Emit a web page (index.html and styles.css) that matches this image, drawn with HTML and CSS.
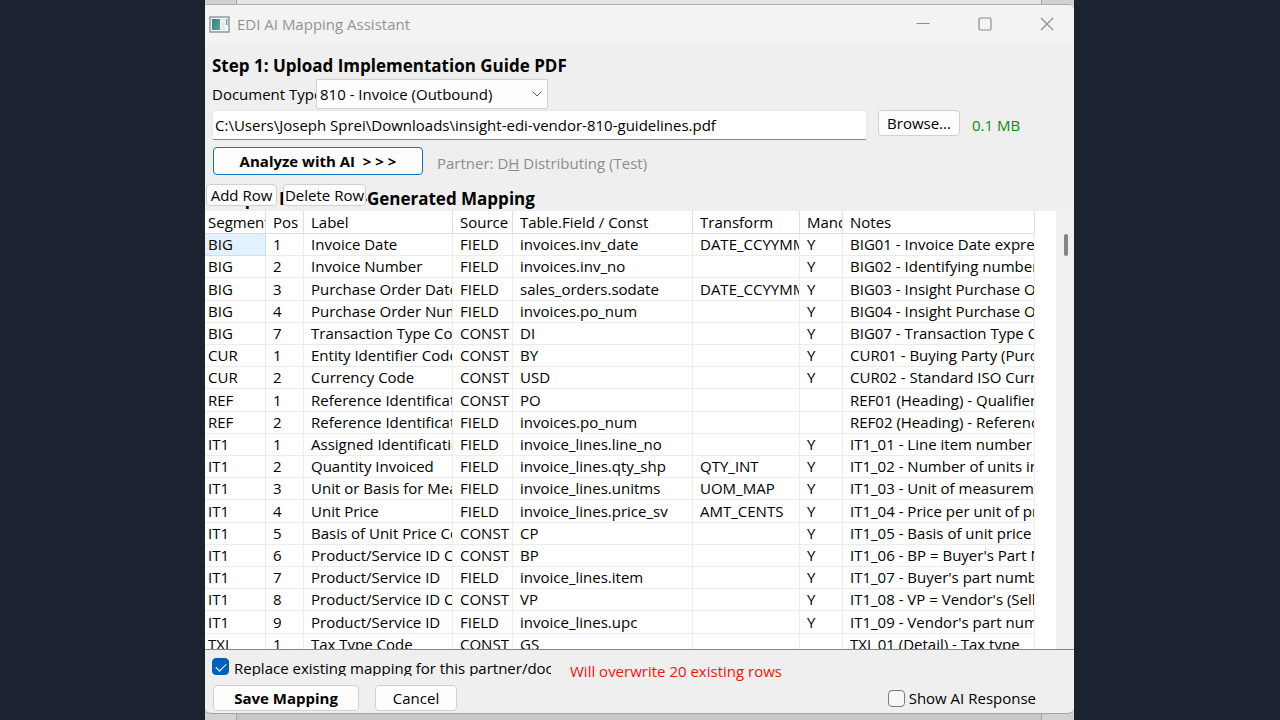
FILE: index.html
```html
<!doctype html>
<html lang="en">
<head>
    <meta charset="utf-8">
    <title>EDI AI Mapping Assistant</title>
    <link rel="stylesheet" href="styles.css">
</head>
<body>
    <div class="desktop">
        <div class="behind behind-top"></div>
        <main class="window">
            <header class="titlebar">
                <svg class="app-icon" width="21" height="17" viewBox="0 0 21 17">
                    <defs>
                        <linearGradient id="pane" x1="0" y1="0" x2="1" y2="1">
                            <stop offset="0" stop-color="#46749b"/>
                            <stop offset="1" stop-color="#55ad76"/>
                        </linearGradient>
                    </defs>
                    <rect x="1" y="1" width="19" height="15" fill="#f4f7f8" stroke="#929a9f" stroke-width="1.5"/>
                    <rect x="3" y="3" width="8" height="11" fill="url(#pane)"/>
                    <rect x="12" y="3" width="4" height="11" fill="#e4eaee"/>
                    <rect x="17" y="3" width="1.5" height="6" fill="#6fa7a0"/>
                </svg>
                <span class="title">EDI AI Mapping Assistant</span>
                <button class="winbtn" aria-label="Minimize"><svg width="14" height="14" viewBox="0 0 14 14"><path d="M.5 6.5h13"/></svg></button>
                <button class="winbtn" aria-label="Maximize"><svg width="14" height="14" viewBox="0 0 14 14"><rect x="1" y="1" width="12" height="12" rx="1.5"/></svg></button>
                <button class="winbtn" aria-label="Close"><svg width="14" height="14" viewBox="0 0 14 14"><path d="M1 1l12 12M13 1L1 13"/></svg></button>
            </header>

            <section class="upload">
                <h2>Step 1: Upload Implementation Guide PDF</h2>
                <div class="row doc-row">
                    <label for="docType" class="doc-label">Document Type:</label>
                    <div class="select-wrap">
                        <select id="docType">
                            <option>810 - Invoice (Outbound)</option>
                        </select>
                        <svg class="chevron" width="12" height="8" viewBox="0 0 12 8"><path d="M1.500 1.500L6 6l4.500-4.500"/></svg>
                    </div>
                </div>
                <div class="row file-row">
                    <input type="text" class="path" aria-label="PDF file" value="C:\Users\Joseph Sprei\Downloads\insight-edi-vendor-810-guidelines.pdf">
                    <button class="btn browse">Browse...</button>
                    <span class="size">0.1 MB</span>
                </div>
                <div class="row analyze-row">
                    <button class="btn analyze">Analyze with AI&nbsp; &gt; &gt; &gt;</button>
                    <span class="partner">Partner: D<u>H</u> Distributing (Test)</span>
                </div>
            </section>

            <section class="review">
                <h2>Step 2: Review AI-Generated Mapping</h2>
                <!-- row buttons float over the heading -->
                <div class="row-tools">
                    <button class="btn">Add Row</button>
                    <button class="btn">Delete Row</button>
                </div>
            </section>

            <div class="grid">
                <div class="grid-body">
                    <table>
                        <colgroup>
                            <col class="c-seg"><col class="c-pos"><col class="c-label"><col class="c-source">
                            <col class="c-field"><col class="c-trans"><col class="c-mand"><col>
                        </colgroup>
                        <thead>
                            <tr><th>Segment</th><th>Pos</th><th>Label</th><th>Source</th><th>Table.Field / Const</th><th>Transform</th><th>Mand</th><th>Notes</th></tr>
                        </thead>
                        <tbody>
                            <tr><td class="selected">BIG</td><td>1</td><td>Invoice Date</td><td>FIELD</td><td>invoices.inv_date</td><td>DATE_CCYYMMDD</td><td>Y</td><td>BIG01 - Invoice Date expressed</td></tr>
                            <tr><td>BIG</td><td>2</td><td>Invoice Number</td><td>FIELD</td><td>invoices.inv_no</td><td></td><td>Y</td><td>BIG02 - Identifying number</td></tr>
                            <tr><td>BIG</td><td>3</td><td>Purchase Order Date</td><td>FIELD</td><td>sales_orders.sodate</td><td>DATE_CCYYMMDD</td><td>Y</td><td>BIG03 - Insight Purchase Order</td></tr>
                            <tr><td>BIG</td><td>4</td><td>Purchase Order Number</td><td>FIELD</td><td>invoices.po_num</td><td></td><td>Y</td><td>BIG04 - Insight Purchase Order</td></tr>
                            <tr><td>BIG</td><td>7</td><td>Transaction Type Code</td><td>CONST</td><td>DI</td><td></td><td>Y</td><td>BIG07 - Transaction Type Code</td></tr>
                            <tr><td>CUR</td><td>1</td><td>Entity Identifier Code</td><td>CONST</td><td>BY</td><td></td><td>Y</td><td>CUR01 - Buying Party (Purchaser)</td></tr>
                            <tr><td>CUR</td><td>2</td><td>Currency Code</td><td>CONST</td><td>USD</td><td></td><td>Y</td><td>CUR02 - Standard ISO Currency</td></tr>
                            <tr><td>REF</td><td>1</td><td>Reference Identification</td><td>CONST</td><td>PO</td><td></td><td></td><td>REF01 (Heading) - Qualifier</td></tr>
                            <tr><td>REF</td><td>2</td><td>Reference Identification</td><td>FIELD</td><td>invoices.po_num</td><td></td><td></td><td>REF02 (Heading) - Reference</td></tr>
                            <tr><td>IT1</td><td>1</td><td>Assigned Identification</td><td>FIELD</td><td>invoice_lines.line_no</td><td></td><td>Y</td><td>IT1_01 - Line item number</td></tr>
                            <tr><td>IT1</td><td>2</td><td>Quantity Invoiced</td><td>FIELD</td><td>invoice_lines.qty_shp</td><td>QTY_INT</td><td>Y</td><td>IT1_02 - Number of units invoiced</td></tr>
                            <tr><td>IT1</td><td>3</td><td>Unit or Basis for Measurement</td><td>FIELD</td><td>invoice_lines.unitms</td><td>UOM_MAP</td><td>Y</td><td>IT1_03 - Unit of measurement</td></tr>
                            <tr><td>IT1</td><td>4</td><td>Unit Price</td><td>FIELD</td><td>invoice_lines.price_sv</td><td>AMT_CENTS</td><td>Y</td><td>IT1_04 - Price per unit of product</td></tr>
                            <tr><td>IT1</td><td>5</td><td>Basis of Unit Price Code</td><td>CONST</td><td>CP</td><td></td><td>Y</td><td>IT1_05 - Basis of unit price</td></tr>
                            <tr><td>IT1</td><td>6</td><td>Product/Service ID Code</td><td>CONST</td><td>BP</td><td></td><td>Y</td><td>IT1_06 - BP = Buyer's Part Number</td></tr>
                            <tr><td>IT1</td><td>7</td><td>Product/Service ID</td><td>FIELD</td><td>invoice_lines.item</td><td></td><td>Y</td><td>IT1_07 - Buyer's part number</td></tr>
                            <tr><td>IT1</td><td>8</td><td>Product/Service ID Code</td><td>CONST</td><td>VP</td><td></td><td>Y</td><td>IT1_08 - VP = Vendor's (Seller's)</td></tr>
                            <tr><td>IT1</td><td>9</td><td>Product/Service ID</td><td>FIELD</td><td>invoice_lines.upc</td><td></td><td>Y</td><td>IT1_09 - Vendor's part number</td></tr>
                            <tr><td>TXI</td><td>1</td><td>Tax Type Code</td><td>CONST</td><td>GS</td><td></td><td></td><td>TXI_01 (Detail) - Tax type</td></tr>
                        </tbody>
                    </table>
                </div>
                <div class="scrollbar"><div class="thumb"></div></div>
            </div>

            <footer class="actions">
                <div class="row replace-row">
                    <input type="checkbox" id="replace" checked>
                    <label for="replace" class="replace-label">Replace existing mapping for this partner/doc type</label>
                    <span class="warning">Will overwrite 20 existing rows</span>
                </div>
                <div class="row save-row">
                    <button class="btn save">Save Mapping</button>
                    <button class="btn cancel">Cancel</button>
                    <input type="checkbox" id="showAi">
                    <label for="showAi">Show AI Response</label>
                </div>
            </footer>
        </main>
        <div class="behind behind-bottom"></div>
    </div>
</body>
</html>
```
FILE: styles.css
```css
* {
    box-sizing: border-box;
}
body {
    margin: 0;
    padding: 0 206px 0 205px;
    background-color: #1b2331;
    color: #000;
    font-family: "Open Sans", "Noto Sans", sans-serif;
    font-size: 15px;
    line-height: 20px;
}
button, input, select {
    font: inherit;
    color: inherit;
    margin: 0;
}
h2 {
    margin: 0;
    font-size: 17px;
    line-height: 24px;
    font-weight: bold;
    white-space: nowrap;
}
.desktop {
    display: flex;
    flex-direction: column;
    height: 100vh;
    background-color: #d2d2d2;
}
/* edges of the window underneath */
.behind {
    margin: 0 32px 0 31px;
    border: 1px solid #a5a5a5;
}
.behind-top {
    height: 4px;
    background-color: #e6e6e6;
    border-width: 0 1px;
}
.behind-bottom {
    height: 6px;
    background-color: #c6c6c6;
    border-width: 0 1px;
}
.window {
    flex: 1;
    min-height: 0;
    display: flex;
    flex-direction: column;
    background-color: #efefef;
    border-top: 1px solid #b0b0b0;
    border-bottom: 1px solid #a5a5a5;
    border-radius: 0 6px 6px 6px;
    overflow: hidden;
}
.titlebar {
    display: flex;
    align-items: center;
    height: 40px;
    padding: 0 6px 2px 4px;
    background-color: #f3f3f3;
}
.title {
    flex: 1;
    margin-left: 7px;
    color: #939393;
}
.winbtn {
    display: flex;
    align-items: center;
    justify-content: center;
    width: 42px;
    height: 32px;
    margin-left: 20px;
    padding: 0;
    border: 0;
    background: none;
}
.winbtn svg {
    fill: none;
    stroke: #8b8b8b;
    stroke-width: 1.2;
}

.row {
    display: flex;
    white-space: nowrap;
}
.btn {
    height: 26px;
    padding: 0;
    background-color: #fdfdfd;
    border: 1px solid #d0d0d0;
    border-radius: 4px;
    line-height: 20px;
    white-space: nowrap;
}
.upload {
    padding: 9px 7px 0 7px;
}
.doc-row {
    align-items: center;
    margin-top: 1px;
}
.doc-label {
    width: 104px;
    overflow: hidden;
}
.select-wrap {
    position: relative;
    width: 232px;
}
select {
    display: block;
    width: 100%;
    height: 30px;
    padding: 0 3px;
    appearance: none;
    background-color: #fdfdfd;
    border: 1px solid #cfcfcf;
    border-radius: 2px;
}
.chevron {
    position: absolute;
    right: 5px;
    top: 11px;
    fill: none;
    stroke: #5c5c5c;
    pointer-events: none;
}
.file-row {
    margin-top: 1px;
}
.path {
    flex: 1;
    min-width: 0;
    height: 30px;
    padding: 0 2px;
    background-color: #fff;
    border: 1px solid #e8e8e8;
    border-bottom: 1px solid #868686;
    border-radius: 2px;
}
.browse {
    width: 82px;
    margin: 0 12px 0 11px;
}
.size {
    width: 95px;
    padding-top: 5px;
    color: #118a11;
}
.analyze-row {
    margin-top: 7px;
    padding-left: 1px;
}
.analyze {
    width: 210px;
    height: 28px;
    border-color: #0c75c9;
    font-weight: bold;
}
.partner {
    margin-left: 14px;
    padding-top: 6px;
    color: #8d8d8d;
}
.review {
    position: relative;
    height: 36px;
    padding: 12px 7px 0 13px;
}
.row-tools {
    position: absolute;
    left: 1px;
    top: 9px;
    display: flex;
    gap: 6px;
}
.row-tools .btn {
    width: 71px;
    height: 22px;
}
.row-tools .btn + .btn {
    width: 83px;
}

.grid {
    flex: 1;
    min-height: 0;
    display: flex;
    background-color: #fff;
    border-bottom: 1px solid #858585;
}
.grid-body {
    flex: 1;
    min-width: 0;
    padding-right: 21px;
    overflow: hidden;
}
table {
    width: 100%;
    height: 445px;
    table-layout: fixed;
    border-collapse: separate;
    border-spacing: 0;
}
th, td {
    padding: 0 1px 0 7px;
    border-right: 1px solid #ececec;
    border-bottom: 1px solid #ececec;
    font-weight: normal;
    text-align: left;
    white-space: nowrap;
    overflow: hidden;
}
th {
    height: 23px;
    border-color: #dedede;
}
td {
    padding-bottom: 1px;
}
th:first-child, td:first-child {
    padding-left: 3px;
}
td.selected {
    background-color: #e3f1fc;
    border-color: #c5e2f7;
}
.c-seg { width: 61px; }
.c-pos { width: 38px; }
.c-label { width: 149px; }
.c-source { width: 60px; }
.c-field { width: 180px; }
.c-trans { width: 107px; }
.c-mand { width: 43px; }
.scrollbar {
    width: 18px;
    padding: 23px 0 0 8px;
    background-color: #f0f0f0;
}
.thumb {
    width: 4px;
    height: 22px;
    background-color: #858585;
    border-radius: 2px;
}

.actions {
    padding: 8px 38px 2px 7px;
}
input[type="checkbox"] {
    appearance: none;
    display: flex;
    justify-content: center;
    width: 17px;
    height: 17px;
    background-color: #f7f7f7;
    border: 1px solid #7c7c7c;
    border-radius: 4px;
}
input[type="checkbox"]:checked {
    background-color: #005fb8;
    border-color: #005fb8;
}
input[type="checkbox"]:checked::before {
    content: "";
    width: 9px;
    height: 5px;
    margin-top: 4px;
    border: solid #fff;
    border-width: 0 0 1px 1px;
    transform: rotate(-45deg);
}
.replace-row {
    height: 27px;
}
.replace-label {
    width: 317px;
    height: 18px;
    margin-left: 5px;
    overflow: hidden;
}
.warning {
    margin-left: 19px;
    padding-top: 3px;
    color: #fb1010;
}
.save-row {
    align-items: center;
    padding-left: 1px;
}
.save {
    width: 146px;
    font-weight: bold;
}
.cancel {
    width: 82px;
    margin: 0 auto 0 16px;
}
.save-row label {
    margin-left: 4px;
}
```
